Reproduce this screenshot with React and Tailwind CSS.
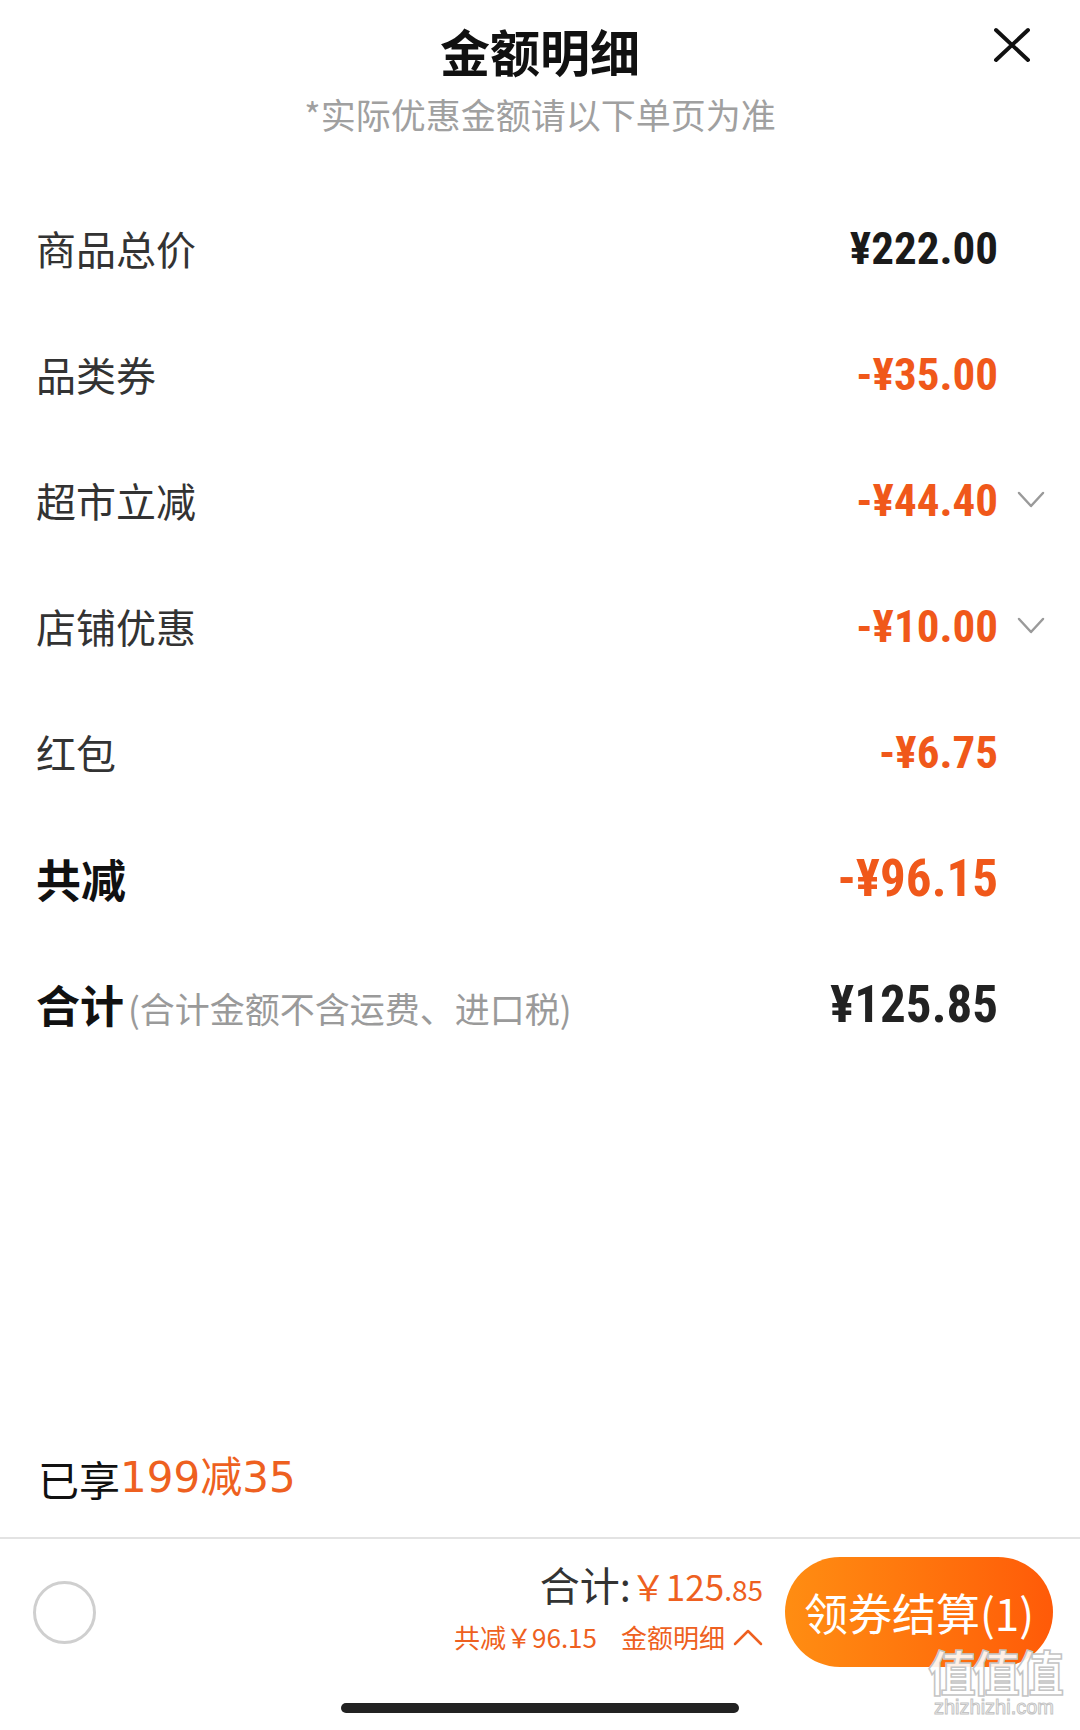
import React from 'react'

const CJK = "font-['Noto_Sans_CJK_SC','Noto_Sans',sans-serif]"
const NUM = "font-['Roboto_Condensed','Liberation_Sans_Narrow','DejaVu_Sans_Condensed',Roboto,'Noto_Sans_CJK_SC',sans-serif]"
const ROUND = "font-['DejaVu_Sans','Noto_Sans_CJK_SC',sans-serif]"

const rows = [
  { label: '商品总价', value: '¥222.00', orange: false },
  { label: '品类券', value: '-¥35.00', orange: true },
  { label: '超市立减', value: '-¥44.40', orange: true, more: true },
  { label: '店铺优惠', value: '-¥10.00', orange: true, more: true },
  { label: '红包', value: '-¥6.75', orange: true },
]

function ChevronDown() {
  return (
    <svg width="28" height="18" viewBox="0 0 28 18" fill="none">
      <polyline points="2,2 14,15 26,2" stroke="#9a9a9a" strokeWidth="2.5" strokeLinecap="round" strokeLinejoin="round" />
    </svg>
  )
}

function ChevronUp() {
  return (
    <svg width="30" height="17" viewBox="0 0 30 17" fill="none">
      <polyline points="2,15 15,2 28,15" stroke="#ee6020" strokeWidth="2.5" strokeLinecap="round" strokeLinejoin="round" />
    </svg>
  )
}

function CloseIcon() {
  return (
    <svg width="38" height="36" viewBox="0 0 38 36" fill="none">
      <path d="M3 3 L35 33 M35 3 L3 33" stroke="#111" strokeWidth="4" strokeLinecap="round" />
    </svg>
  )
}

function Row({ label, value, orange, more }) {
  return (
    <div className="flex h-[126px] items-center justify-between pl-[36px] pr-[35px]">
      <span className="text-[40px] leading-none text-[#333]">{label}</span>
      <div className="flex items-center">
        <span
          className={`${NUM} text-[45px] font-bold leading-none ${orange ? 'text-[#f0581a]' : 'text-[#1a1a1a]'}`}
        >
          {value}
        </span>
        <span className="flex w-[47px] justify-end">{more && <ChevronDown />}</span>
      </div>
    </div>
  )
}

export default function App() {
  return (
    <div className={`${CJK} relative flex h-[1730px] w-[1080px] flex-col overflow-hidden bg-white`}>
      {/* header */}
      <div className="relative flex flex-col items-center pt-[20px]">
        <h1 className="text-[50px] font-bold leading-[60px] text-[#111]">金额明细</h1>
        <p className="mt-[11px] text-[35px] leading-[46px] text-[#a0a0a0]">*实际优惠金额请以下单页为准</p>
        <button className="absolute right-[49px] top-[27px]">
          <CloseIcon />
        </button>
      </div>

      {/* detail rows */}
      <div className="mt-[48px] flex flex-col">
        {rows.map((r) => (
          <Row key={r.label} {...r} />
        ))}
        <div className="flex h-[126px] items-center justify-between pl-[36px] pr-[82px]">
          <span className="text-[45px] font-bold leading-none text-[#111]">共减</span>
          <span className={`${NUM} text-[51px] font-bold leading-none text-[#f0581a]`}>-¥96.15</span>
        </div>
        <div className="flex h-[126px] items-center justify-between pl-[36px] pr-[82px]">
          <div className="flex items-baseline">
            <span className="text-[44px] font-bold leading-none text-[#111]">合计</span>
            <span className="ml-[4px] text-[35px] leading-none text-[#9a9a9a]">(合计金额不含运费、进口税)</span>
          </div>
          <span className={`${NUM} text-[51px] font-bold leading-none text-[#222]`}>¥125.85</span>
        </div>
      </div>

      <div className="flex-1" />

      {/* promotion */}
      <div className="flex items-center pb-[31px] pl-[38px]">
        <span className="text-[41px] leading-[56px] text-[#111]">已享</span>
        <span className={`${ROUND} text-[42px] leading-[56px] text-[#ee6020]`}>199减35</span>
      </div>

      {/* bottom bar */}
      <div className="flex h-[193px] flex-col border-t-2 border-[#e3e3e3]">
        <div className="flex h-[146px] items-center pl-[33px] pr-[27px]">
          <span className="h-[63px] w-[63px] rounded-full border-[3px] border-[#cfcfcf]" />
          <div className="flex-1" />
          <div className="-mt-[10px] flex flex-col items-end">
            <div className="flex items-baseline leading-[48px]">
              <span className="text-[40px] text-[#333]">合计:</span>
              <span className="text-[35px] text-[#ee6020]">￥125</span>
              <span className="text-[28px] text-[#ee6020]">.85</span>
            </div>
            <div className="mt-[7px] flex items-center text-[26px] leading-[34px] text-[#ee6020]">
              <span>共减￥96.15</span>
              <span className="ml-[24px]">金额明细</span>
              <span className="ml-[8px] flex">
                <ChevronUp />
              </span>
            </div>
          </div>
          <button className="ml-[22px] flex h-[110px] w-[268px] items-center justify-center rounded-full bg-gradient-to-r from-[#ff8d12] to-[#ff5a08] text-[44px] leading-none text-white">
            领券结算(1)
          </button>
        </div>
        <div className="mt-[18px] flex justify-center">
          <span className="h-[10px] w-[398px] rounded-full bg-[#222]" />
        </div>
      </div>

      {/* watermark */}
      <div className="pointer-events-none absolute left-[928px] top-[1644px] flex flex-col items-center">
        <span className="text-[48px] font-bold leading-[52px] tracking-[-4px] text-white/90 [-webkit-text-stroke:1.5px_#c4c4c4]">值值值</span>
        <span className="font-['Liberation_Sans',sans-serif] text-[20px] leading-[22px] text-white/90 [-webkit-text-stroke:1px_#c4c4c4]">zhizhizhi.com</span>
      </div>
    </div>
  )
}
